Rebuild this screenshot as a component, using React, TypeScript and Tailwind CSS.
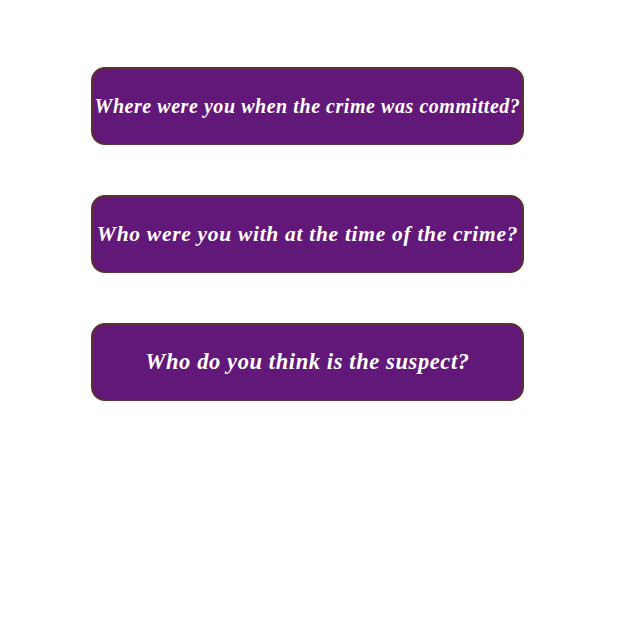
import React from 'react';

const questions = [
  { text: 'Where were you when the crime was committed?', size: 'text-[20px] tracking-[0.55px]' },
  { text: 'Who were you with at the time of the crime?', size: 'text-[21.5px] tracking-[0.7px]' },
  { text: 'Who do you think is the suspect?', size: 'text-[22.5px] tracking-[0.6px]' },
];

const App: React.FC = () => {
  return (
    <div className="min-h-[626px] w-[626px] bg-white pt-[67px] pl-[91px]">
      <div className="flex flex-col gap-[50px]">
        {questions.map((q) => (
          <button
            key={q.text}
            className={`flex h-[78px] w-[433px] items-center justify-center rounded-[14px] border-2 border-[#5e3030] bg-[#621878] px-0 font-bold italic text-white ${q.size}`}
            style={{ fontFamily: '"Liberation Serif", "Times New Roman", serif' }}
          >
            {q.text}
          </button>
        ))}
      </div>
    </div>
  );
};

export default App;
